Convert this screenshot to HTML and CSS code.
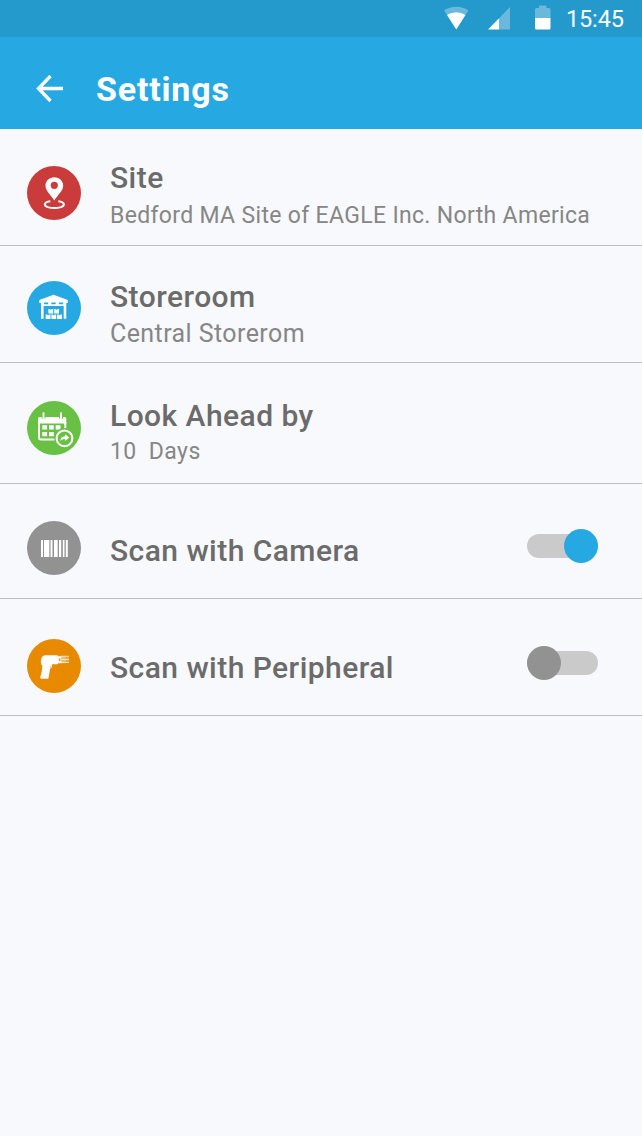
FILE: index.html
```html
<!DOCTYPE html>
<html lang="en">
<head>
<meta charset="utf-8">
<title>Settings</title>
<link rel="stylesheet" href="styles.css">
</head>
<body>
<div class="status">
  <svg class="signals" width="91" height="28" viewBox="0 0 91 28">
    <path class="dim" d="M0 6.500C7 1.500 17.500 1.500 24.500 6.500L21.500 11C16 7.300 8.500 7.300 3 11Z"/>
    <path d="M3 11C8.500 7.300 16 7.300 21.500 11L12.300 25.500Z"/>
    <path class="dim" d="M66 3V25.500H55V14.200Z"/>
    <path d="M55 14.200V25.500H44Z"/>
  </svg>
  <svg class="battery" width="16" height="26" viewBox="0 0 16 26">
    <path class="dim" d="M0 13V4.500Q0 3 1.500 3H4V1Q4 .5 5 .5H10.500Q11.500 .5 11.500 1V3H14Q15.500 3 15.500 4.500V13Z"/>
    <path d="M0 13H15.500V23Q15.500 24.500 14 24.500H1.500Q0 24.500 0 23Z"/>
  </svg>
  <span class="clock">15:45</span>
</div>
<header class="bar">
  <svg class="back" width="28" height="28" viewBox="0 0 28 28"><path d="M14.500 1L2.500 13.500L14.500 26M2.500 13.500H27"/></svg>
  <h1 class="heading">Settings</h1>
</header>
<main>
  <section class="row site">
    <svg class="icon red" viewBox="0 0 54 54">
      <path fill-rule="evenodd" d="M27.300 11.200C22 11.200 18.500 15 18.500 19.700C18.500 25 24 29 27.300 34.500C30.500 29 36.200 25 36.200 19.700C36.200 15 32.500 11.200 27.300 11.200ZM27.300 15.700A3.600 3.600 0 1 1 27.300 22.900A3.600 3.600 0 1 1 27.300 15.700Z"/>
      <path class="line" stroke-width="2" d="M23.300 35.300C16.500 36.200 16.500 39.700 20.800 41.100Q27.300 42.900 33.900 41.100C38.200 39.700 38.200 36.200 31.300 35.300"/>
    </svg>
    <div class="texts"><h2 class="title">Site</h2><p class="sub">Bedford MA Site of EAGLE Inc. North America</p></div>
  </section>
  <section class="row store">
    <svg class="icon blue" viewBox="0 0 54 54">
      <path fill-rule="evenodd" d="M26.500 13.800L40.800 19V22H39.300V37.800H36.700V25H16.600V37.800H14V22H12.300V19ZM17 21.500V23.200H21.200V21.500ZM24.300 21.500V23.200H28.700V21.500ZM31.900 21.500V23.200H36.200V21.500Z"/>
      <path d="M21.400 28h1.700v.7h1.400v-.7h1.700v4.500h-4.800zM27.200 28h1.700v.7h1.400v-.7h1.700v4.500h-4.800zM18.700 33.500h1.700v.7h1.400v-.7h1.700v4.500h-4.800zM24.400 33.500h1.700v.7h1.400v-.7h1.700v4.500h-4.800zM30.100 33.500h1.700v.7h1.400v-.7h1.700v4.500h-4.800z"/>
    </svg>
    <div class="texts"><h2 class="title">Storeroom</h2><p class="sub">Central Storerom</p></div>
  </section>
  <section class="row ahead">
    <svg class="icon green" viewBox="0 0 54 54">
      <path d="M13 16H14.500V17.500H18.500V16H32V17.500H36V16H37.500Q39.300 16 39.300 18V22.500H11V18Q11 16 13 16Z"/>
      <path class="line" stroke-width="2" d="M12 21V36.300Q12 38.600 14.200 38.600H28M38.300 21V27"/>
      <path class="line" stroke-width="2" stroke-linecap="round" d="M16.500 12.200V17M34 12.200V17"/>
      <path d="M15.300 24.200h4.800v4.300h-4.800zM22 24.200h4.800v4.300h-4.800zM28.700 24.200h4.800v4.300h-4.800zM15.300 31h4.800v4.300h-4.800zM22 31h4.800v4.300h-4.800z"/>
      <circle class="green-fill" cx="37.500" cy="37.300" r="10.200"/>
      <circle class="line" stroke-width="2" cx="37.500" cy="37.300" r="7.900"/>
      <path d="M33.300 40C33.500 37 35 35.500 38 35.300V33.200L42.300 36.500L38 40V38C36 37.800 34.800 38.600 33.300 40Z"/>
    </svg>
    <div class="texts"><h2 class="title">Look Ahead by</h2><p class="sub">10&nbsp; Days</p></div>
  </section>
  <section class="row camera">
    <svg class="icon gray" viewBox="0 0 54 54">
      <path d="M14 19h2v17h-2zM17 19h5.300v17H17zM23.500 19h2v17h-2zM27 19h1v17h-1zM28 19h2.700v17H28zM32 19h2.200v17H32zM35.800 19h1.700v17h-1.700zM38.800 19h2v17h-2z"/>
    </svg>
    <h2 class="title">Scan with Camera</h2>
    <span class="switch on"><i class="knob"></i></span>
  </section>
  <section class="row peripheral">
    <svg class="icon orange" viewBox="0 0 54 54">
      <path d="M17.500 16.200H30.700V17.200H34.500V19.500H31.800V21.800H34.500V24.300H31L30.500 25.300H24.500Q22.700 28.500 22.600 33L21.300 39.800H14.300L13 38.700Q15.600 31.500 15.200 26.500Q13.500 25.600 13.900 21.500Q14.600 17 17.500 16.200Z"/>
      <path class="line" stroke-width=".9" d="M24.800 25Q25 29.300 22.700 30"/>
      <path d="M35.500 16.800h1v7.600h-1zM37.600 16.800h.8v7.600h-.8z" opacity=".45"/>
      <path class="line" stroke-width="1" opacity=".75" d="M33 17.300H42M33 20.500H42M33 23.500H42"/>
      <path class="line" stroke-width="1" opacity=".5" d="M33 19H42M33 22H42"/>
    </svg>
    <h2 class="title">Scan with Peripheral</h2>
    <span class="switch"><i class="knob"></i></span>
  </section>
</main>
</body>
</html>
```
FILE: styles.css
```css
* { box-sizing: border-box; }
body { margin: 0; background: #f8f9fd; font-family: Roboto, "Liberation Sans", sans-serif; }
h1, h2, p { margin: 0; }
svg { display: block; fill: #fff; flex: none; }
.status { height: 37px; background: #2499cb; display: flex; padding: 4px 0 0 444px; }
.battery { margin-top: 1px; }
.dim { opacity: .32; }
.clock { color: #fff; font-size: 23.5px; line-height: 30px; letter-spacing: -.15px; margin-left: 15px; white-space: nowrap; }
.bar { height: 92px; background: #26a9e2; display: flex; align-items: center; padding: 11px 0 0 36px; }
.back { fill: none; stroke: #fff; stroke-width: 3.3; }
.heading { margin-left: 32px; color: #fff; font-size: 34px; font-weight: 700; letter-spacing: .8px; line-height: 40px; }
.row { display: flex; align-items: flex-start; border-bottom: 1px solid #bfc0c4; padding: 0 44px 0 27px; }
.icon { width: 54px; height: 54px; border-radius: 50%; margin-right: 29px; }
.line { fill: none; stroke: #fff; }
.red { background: #ca3c3c; }
.blue { background: #26a9e2; }
.green { background: #68c145; }
.green-fill { fill: #68c145; }
.gray { background: #929292; }
.orange { background: #e78a00; }
.title { color: #6b6b6b; font-size: 30px; font-weight: 500; line-height: 36px; letter-spacing: .45px; white-space: nowrap; }
.sub { color: #868686; font-size: 23px; line-height: 30px; letter-spacing: .33px; white-space: nowrap; }
.site { height: 117px; padding-top: 37px; }
.site .texts { margin-top: -6px; }
.site .sub { margin-top: 5px; }
.store { height: 117px; padding-top: 35px; }
.store .texts { margin-top: -2px; }
.store .sub { margin-top: 4px; font-size: 25px; letter-spacing: .42px; }
.ahead { height: 121px; padding-top: 38px; }
.ahead .texts { margin-top: -3px; }
.ahead .sub { margin-top: 3px; letter-spacing: .4px; }
.camera { height: 115px; padding-top: 37px; }
.camera .title { margin-top: 12px; }
.peripheral { height: 117px; padding-top: 40px; }
.peripheral .title { margin-top: 11px; }
.switch { width: 71px; height: 24px; margin: 13px 0 0 auto; border-radius: 12px; background: #cacaca; display: flex; align-items: center; }
.peripheral .switch { margin-top: 12px; }
.knob { width: 34px; height: 34px; border-radius: 50%; background: #929292; flex: none; }
.on { justify-content: flex-end; }
.on .knob { background: #26a9e2; }
```
